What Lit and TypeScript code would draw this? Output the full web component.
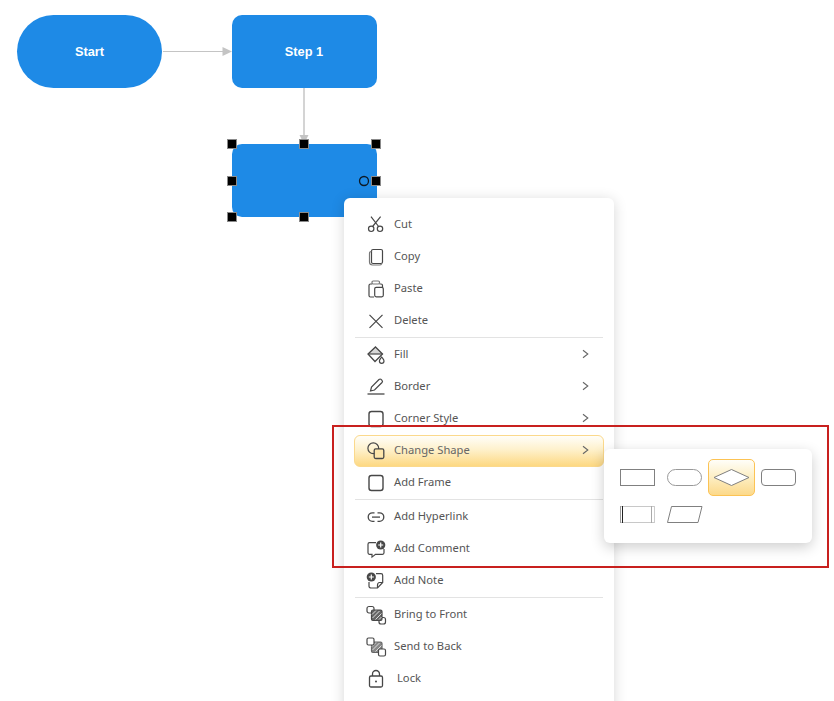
import { LitElement, html, css, svg } from "lit";
import { customElement } from "lit/decorators.js";

const ic = (body: unknown) => html`<svg class="ic" width="24" height="24" viewBox="0 0 24 24" fill="none" stroke="#474747" stroke-width="1.2">${body}</svg>`;

const hatch = (stroke: string, fill: string) => svg`
  <rect x="7.5" y="8" width="10.5" height="10.5" rx="1.5" fill="${fill}" stroke="${stroke}"/>
  <path d="M8 12.5 12 8.5M8.5 16 15.5 9M11.5 17.5 17.5 11.5M15 17.500 17.500 15" stroke="#ddd" stroke-width="1"/>`;

const icons: Record<string, unknown> = {
  cut: ic(svg`<circle cx="7.2" cy="16.8" r="2.7"/><circle cx="16" cy="16.8" r="2.7"/><path d="M8.6 14.500 16.600 4.700M14.600 14.500 7 4.700"/>`),
  copy: ic(svg`<rect x="7.500" y="5.500" width="11" height="14" rx="1.500"/><path d="M7.500 7.500C6.200 7.500 5.500 8.200 5.500 9.500v8.500c0 2 1 3 3 3h7c1 0 1.800-.4 2.200-1.200" stroke="#777"/>`),
  paste: ic(svg`<path d="M8 8H6.500C5.500 8 5 8.500 5 9.500v10C5 20.500 5.500 21 6.500 21H10M15.500 8H17c1 0 1.500.5 1.500 1.500V11"/><rect x="8" y="5" width="7.500" height="3" rx="1.200" stroke="#777"/><rect x="10.700" y="11.300" width="8.600" height="9.500" rx="1.500"/>`),
  del: ic(svg`<path d="M5.500 6.800 18.500 19.800M18.500 6.800 5.500 19.800"/>`),
  fill: ic(svg`<path d="M11.500 5 18.500 12 11 19.500 4 12Z" stroke-width="1.300"/><path d="M4 12H18.500L11.500 5Z" fill="#474747" fill-opacity=".22" stroke="none"/><path d="M4 12H18.500"/><path d="M17.700 15C18.900 16.700 20 17.700 20 19a2.300 2.300 0 0 1-4.600 0C15.400 17.700 16.500 16.700 17.700 15Z" fill="#fff"/>`),
  border: ic(svg`<path d="M6.500 17 7.500 13 15 5.500c.8-.7 1.600-.7 2.200 0l.8.8c.7.700.7 1.400 0 2.200L10.500 16Z"/><path d="M3.500 20H20.500" stroke-width="1.300"/>`),
  square: ic(svg`<rect x="5" y="5.500" width="14" height="15" rx="2.500" stroke-width="1.400"/>`),
  shape: ic(svg`<circle cx="9.300" cy="10.300" r="5.400"/><rect x="10.200" y="10.900" width="9.600" height="9.600" rx="1.500" fill="#fde6ab" stroke-width="1.300"/>`),
  link: ic(svg`<path d="M10.500 8.800H8.500a4.300 4.300 0 0 0 0 8.600h2M13.500 8.800h2a4.300 4.300 0 0 1 0 8.600h-2" stroke-width="1.300"/><path d="M8 13.100H16" stroke-width="1.300"/>`),
  comment: ic(svg`<path d="M12 6.700H5.500C4.500 6.700 4 7.200 4 8.200v8.600c0 1 .5 1.500 1.500 1.500H8v2.800l3.500-2.800h7c1 0 1.500-.5 1.500-1.500V13"/><circle cx="16.700" cy="9" r="4.600" fill="#474747" stroke="none"/><path d="M16.700 6.500v5M14.200 9h5" stroke="#fff" stroke-width="1.200"/>`),
  note: ic(svg`<path d="M12 5.700h5c1 0 1.700.7 1.700 1.700v7L13.500 20H7c-1 0-2-.7-2-1.700V14"/><path d="M13.500 20v-3c0-1 .8-2.500 2-2.500h3.200"/><circle cx="7.300" cy="9" r="4.600" fill="#474747" stroke="none"/><path d="M7.300 6.500v5M4.800 9h5" stroke="#fff" stroke-width="1.200"/>`),
  front: ic(svg`<rect x="3" y="4.500" width="7" height="6.500" rx="2"/><rect x="15" y="15.500" width="6.500" height="6.500" rx="2"/>${hatch("#474747", "#666")}`),
  back: ic(svg`${hatch("#666", "#888")}<rect x="3" y="4" width="7" height="7" rx="1.500" fill="#fff"/><rect x="14.500" y="15" width="7" height="7" rx="1.500" fill="#fff"/>`),
  lock: ic(svg`<rect x="5.500" y="10" width="13" height="11" rx="1.500" stroke-width="1.300"/><path d="M8.500 10V8a3.500 3.500 0 0 1 7 0v2" stroke-width="1.300"/><circle cx="12" cy="15.500" r="1" fill="#474747" stroke="none"/>`),
};

type Row = { label: string; icon: string; sub?: boolean; active?: boolean; sep?: boolean; shift?: boolean };

const rows: Row[] = [
  { label: "Cut", icon: "cut" },
  { label: "Copy", icon: "copy" },
  { label: "Paste", icon: "paste" },
  { label: "Delete", icon: "del", sep: true },
  { label: "Fill", icon: "fill", sub: true },
  { label: "Border", icon: "border", sub: true },
  { label: "Corner Style", icon: "square", sub: true },
  { label: "Change Shape", icon: "shape", sub: true, active: true },
  { label: "Add Frame", icon: "square", sep: true },
  { label: "Add Hyperlink", icon: "link" },
  { label: "Add Comment", icon: "comment" },
  { label: "Add Note", icon: "note", sep: true },
  { label: "Bring to Front", icon: "front" },
  { label: "Send to Back", icon: "back" },
  { label: "Lock", icon: "lock", shift: true },
];

const handles = [
  [232, 144], [304, 144], [376, 144],
  [232, 181], [376, 181],
  [232, 217], [304, 217], [376, 217],
];

const shapes = [
  svg`<rect x="6.500" y="10.500" width="34" height="16" fill="#fff" stroke="#808080"/>`,
  svg`<rect x="6.500" y="10.500" width="34" height="16" rx="8" fill="#fff" stroke="#999"/>`,
  svg`<path d="M6 18.500 23.500 10.500 41 18.500 23.500 26.500Z" fill="#fff" stroke="#808080"/>`,
  svg`<rect x="6.500" y="10.500" width="34" height="16" rx="3.500" fill="#fff" stroke="#808080"/>`,
  svg`<rect x="6.500" y="10.500" width="34" height="16" fill="#fff" stroke="#c8c8c8"/><path d="M6.500 10v17" stroke="#999"/><path d="M8.500 10v17" stroke="#222"/><path d="M37.500 10v17" stroke="#aaa"/><path d="M40.500 10v17" stroke="#ccc"/>`,
  svg`<path d="M10.500 10.500H41L37 26.500H6.500Z" fill="#fff" stroke="#808080"/>`,
];

@customElement("app-root")
export class AppRoot extends LitElement {
  static styles = css`
    :host { display: block; position: relative; width: 834px; height: 701px; overflow: hidden; background: #fff; font-family: "Noto Sans", "Liberation Sans", sans-serif; }
    .wires { position: absolute; left: 0; top: 0; }
    .node { position: absolute; width: 145px; height: 73px; box-sizing: border-box; background: #1e8ae6; color: #fff; display: flex; align-items: center; justify-content: center; font: bold 12.800px "Liberation Sans", sans-serif; border-radius: 10px; }
    .start { left: 17px; top: 15px; border-radius: 37px; }
    .step { left: 231.500px; top: 15px; }
    .sel { left: 231.500px; top: 144px; }
    .handle { position: absolute; width: 8px; height: 8px; margin: -5px 0 0 -5px; background: #000; border: 1px solid #8a8a8a; }
    .ring { position: absolute; left: 358px; top: 175px; }
    .menu { position: absolute; left: 344px; top: 198px; width: 270px; height: 540px; box-sizing: border-box; padding: 10px 10px 0; background: #fff; border-radius: 6px; box-shadow: 0 2px 14px rgba(0,0,0,.16); display: flex; flex-direction: column; }
    .row { height: 32px; flex: none; display: flex; align-items: center; padding: 0 14px 2px 9px; gap: 6px; font-size: 11.200px; color: #555; box-sizing: border-box; border-radius: 6px; border: 1px solid transparent; }
    .row .ic { flex: none; position: relative; top: 1px; }
    .row .label { flex: 1; }
    .row.shift .label { padding-left: 3px; }
    .row.active { background: linear-gradient(#fffef9, #fef1cc 45%, #fdd882); border-color: #fbd98c; margin: 1px 0 -1px; padding-bottom: 4px; }
    .row.active .label { color: #666; }
    .chev { flex: none; position: relative; top: 1px; }
    .sep { flex: none; height: 1px; margin: 1px 1px 0; background: #e3e3e3; }
    .sub { position: absolute; left: 604px; top: 449px; box-sizing: border-box; padding: 10px; background: #fff; border-radius: 6px; box-shadow: 0 4px 14px rgba(0,0,0,.2); display: grid; grid-template-columns: repeat(4, 47px); grid-auto-rows: 37px; }
    .cell { box-sizing: border-box; border: 1px solid transparent; border-radius: 5px; }
    .cell svg { display: block; margin: -1px; }
    .cell.on { background: linear-gradient(#fffef9, #fdf0c8 45%, #fcd98a); border-color: #fcc354; }
    .mark { position: absolute; left: 332px; top: 425px; width: 497px; height: 143px; box-sizing: border-box; border: 2px solid #c8201e; pointer-events: none; }
  `;

  render() {
    return html`
      <svg class="wires" width="400" height="160" fill="none">
        <path d="M163 51.500H224" stroke="#c4c4c4"/>
        <path d="M222.500 47 232 51.500 222.500 56Z" fill="#c4c4c4"/>
        <path d="M304 88V136" stroke="#d4d4d4" stroke-width="2"/>
        <path d="M299.500 135 308.500 135 304 144Z" fill="#c4c4c4"/>
      </svg>
      <div class="node start">Start</div>
      <div class="node step">Step 1</div>
      <div class="node sel"></div>
      ${handles.map(([x, y]) => html`<div class="handle" style="left:${x}px;top:${y}px"></div>`)}
      <svg class="ring" width="12" height="12" fill="none"><circle cx="6" cy="6" r="4.500" stroke="#0d1a26" stroke-width="1.300"/></svg>

      <div class="menu">
        ${rows.map(r => html`
          <div class="row ${r.active ? "active" : ""} ${r.shift ? "shift" : ""}">
            ${icons[r.icon]}
            <span class="label">${r.label}</span>
            ${r.sub ? html`<svg class="chev" width="8" height="12" viewBox="0 0 8 12" fill="none" stroke="#666" stroke-width="1.100"><path d="M2 2.200 6.800 6 2 9.800"/></svg>` : ""}
          </div>
          ${r.sep ? html`<div class="sep"></div>` : ""}
        `)}
      </div>

      <div class="sub">
        ${shapes.map((s, i) => html`<div class="cell ${i === 2 ? "on" : ""}"><svg width="47" height="37" viewBox="0 0 47 37">${s}</svg></div>`)}
      </div>
      <div class="mark"></div>
    `;
  }
}
